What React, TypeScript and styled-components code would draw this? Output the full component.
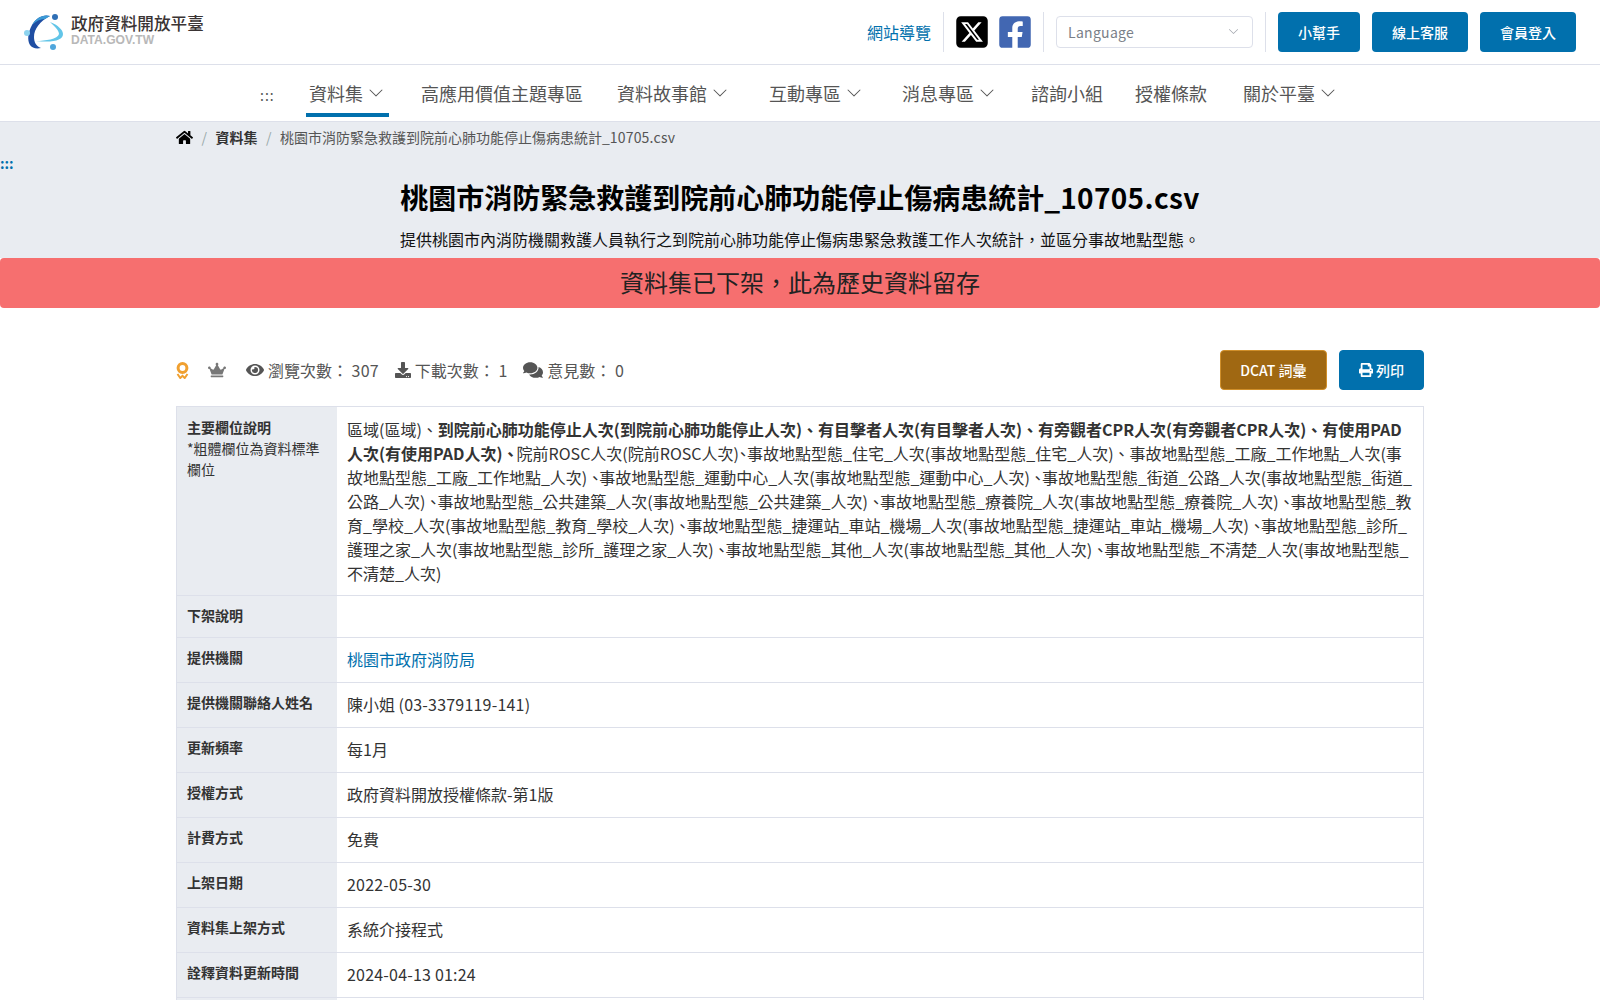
import React from "react";
import styled, { createGlobalStyle } from "styled-components";
import { FaHome, FaEye, FaDownload, FaComments, FaPrint, FaCrown, FaFacebookSquare } from "react-icons/fa";
import { FaSquareXTwitter } from "react-icons/fa6";
import { BsChevronDown } from "react-icons/bs";

const GlobalStyle = createGlobalStyle`
  html, body {
    margin: 0;
    padding: 0;
    height: 1000px;
    overflow: hidden;
    background: #fff;
    font-family: "Noto Sans CJK TC", "Noto Sans", sans-serif;
    color: #333;
  }
  * { box-sizing: border-box; }
`;

const TopBar = styled.header`
  height: 65px;
  display: flex;
  align-items: center;
  justify-content: space-between;
  padding: 0 24px 1px;
  border-bottom: 1px solid #dde0ea;
`;

const Logo = styled.a`
  display: flex;
  align-items: center;
  gap: 7px;
`;

const LogoText = styled.div`
  display: flex;
  flex-direction: column;
  padding-bottom: 2px;
`;

const LogoTitle = styled.span`
  font-size: 16.6px;
  font-weight: 500;
  color: #3a3434;
  line-height: 18px;
`;

const LogoSub = styled.span`
  font-family: "Liberation Sans", sans-serif;
  font-size: 12.1px;
  font-weight: 700;
  color: #b8b8b8;
  line-height: 14px;
  margin-top: 1px;
`;

const TopRight = styled.div`
  display: flex;
  align-items: center;
  height: 40px;
`;

const SiteMapLink = styled.a`
  font-size: 16px;
  color: #0170ad;
  padding-right: 12px;
`;

const Divider = styled.span`
  width: 1px;
  height: 40px;
  background: #dde0ea;
`;

const Socials = styled.div`
  display: flex;
  align-items: center;
  gap: 11px;
  padding: 0 12px;
`;

const XIcon = styled(FaSquareXTwitter)`
  display: block;
  width: 32px;
  height: 36px;
  color: #000;
`;

const FbIcon = styled(FaFacebookSquare)`
  display: block;
  width: 32px;
  height: 36px;
  color: #4267b2;
`;

const LanguageSelect = styled.div`
  width: 197px;
  height: 32px;
  margin: 0 12px;
  padding: 0 13px 0 11px;
  display: flex;
  align-items: center;
  justify-content: space-between;
  border: 1px solid #dde0ea;
  border-radius: 4px;
  font-size: 14px;
  color: #7a7f88;
  letter-spacing: 0.3px;
`;

const ButtonGroup = styled.div`
  display: flex;
  gap: 12px;
  margin-left: 12px;
`;

const HeadButton = styled.a`
  height: 40px;
  padding: 0 20px;
  display: flex;
  align-items: center;
  background: #0170ad;
  border-radius: 4px;
  color: #fff;
  font-size: 14px;
  font-weight: 500;
`;

const Nav = styled.nav`
  height: 57px;
  display: flex;
  align-items: flex-start;
  padding-left: 260px;
  border-bottom: 1px solid #dde0ea;
`;

const NavAnchor = styled.span`
  width: 46px;
  height: 52px;
  padding-top: 7px;
  font-size: 14px;
  color: #555;
  display: flex;
  align-items: center;
  letter-spacing: 1px;
`;

const NavItem = styled.a<{ $active?: boolean; $gap: number }>`
  display: flex;
  align-items: center;
  gap: 5px;
  height: 52px;
  padding: 7px 5px 0 3px;
  margin-right: ${(p) => p.$gap}px;
  font-size: 18px;
  color: #555;
  border-bottom: 4px solid ${(p) => (p.$active ? "#0170ad" : "transparent")};
`;

const Hero = styled.section`
  background: #e9ecf1;
  height: 136px;
  display: flex;
  flex-direction: column;
`;

const Breadcrumb = styled.div`
  display: flex;
  align-items: center;
  height: 30px;
  padding-left: 176px;
  font-size: 14px;
  color: #555;
`;

const Sep = styled.span`
  margin: 0 8.5px;
  color: #9aa;
`;

const CrumbStrong = styled.span`
  font-weight: 700;
  color: #333;
`;

const HeroAnchor = styled.div`
  margin-top: 4px;
  font-size: 14px;
  line-height: 14px;
  color: #0170ad;
  font-weight: 700;
  height: 18px;
`;

const Title = styled.h1`
  margin: 3px 0 0;
  text-align: center;
  font-size: 28px;
  line-height: 40px;
  font-weight: 700;
  color: #000;
`;

const Subtitle = styled.p`
  margin: 10px 0 0;
  text-align: center;
  font-size: 16px;
  line-height: 24px;
  color: #111;
`;

const Digits = styled.span`
  letter-spacing: 0.0125em;
`;

const Banner = styled.div`
  height: 50px;
  background: #f66f6f;
  border-radius: 4px;
  display: flex;
  align-items: center;
  justify-content: center;
  padding-bottom: 4px;
  font-size: 24px;
  color: #222;
`;

const Main = styled.main`
  width: 1248px;
  margin: 42px auto 0;
`;

const StatsRow = styled.div`
  display: flex;
  align-items: center;
  justify-content: space-between;
  height: 40px;
  margin-bottom: 16px;
`;

const Stats = styled.div`
  display: flex;
  align-items: center;
  font-size: 16px;
  color: #555;
`;

const Stat = styled.span<{ $gap?: number }>`
  display: flex;
  align-items: center;
  gap: 4px;
  margin-right: ${(p) => p.$gap ?? 16}px;
  white-space: pre;
`;

const Actions = styled.div`
  display: flex;
  gap: 12px;
`;

const ActionButton = styled.a<{ $brown?: boolean }>`
  height: 40px;
  padding: 0 ${(p) => (p.$brown ? 19.5 : 19)}px;
  display: flex;
  align-items: center;
  gap: 3px;
  border-radius: 4px;
  font-size: 14px;
  font-weight: 500;
  color: #fff;
  background: ${(p) => (p.$brown ? "#a06812" : "#0170ad")};
  border: 1px solid ${(p) => (p.$brown ? "#d08f2a" : "#0170ad")};
`;

const InfoTable = styled.table`
  width: 100%;
  border-collapse: collapse;
  table-layout: fixed;
  border: 1px solid #dde0ea;
`;

const Row = styled.tr`
  border-bottom: 1px solid #dde0ea;
`;

const Label = styled.th<{ $lead?: boolean }>`
  width: 160px;
  padding: ${(p) => (p.$lead ? 10 : 9)}px 10px 0;
  background: #e9ecf1;
  vertical-align: top;
  text-align: left;
  font-size: 14px;
  line-height: 21px;
  font-weight: 700;
  color: #333;
`;

const LabelNote = styled.span`
  font-weight: 400;
  display: block;
`;

const Value = styled.td<{ $height?: number; $lead?: boolean }>`
  padding: ${(p) => (p.$lead ? "10px 10px 10px 10.5px" : "9px 10px 11px 10.5px")};
  vertical-align: top;
  font-size: 16px;
  line-height: 24px;
  color: #333;
  height: ${(p) => p.$height ?? 45}px;
`;

const ValueLink = styled.a`
  color: #0170ad;
`;

const StrongFields = styled.b`
  margin-right: -2px;
`;

// the plain 、 sits tighter in the reference, the first one after ROSC most of all
const HalfComma = styled.span`
  font-feature-settings: "halt";
`;

const TightComma = styled.span`
  letter-spacing: -4px;
`;

const withCommas = (text: string) =>
  text.split("、").map((part, i) => (
    <React.Fragment key={i}>
      {i === 1 && "、"}
      {i > 1 && <TightComma>、</TightComma>}
      {part}
    </React.Fragment>
  ));

const Medal = () => (
  <svg width="13" height="17" viewBox="0 0 13 17" fill="none">
    <circle cx="6.5" cy="6" r="4.4" stroke="#f0a030" strokeWidth="3" />
    <path d="M1.5 12l2.8 4 2.200-2.200 2.200 2.200 2.800-4" stroke="#f0a030" strokeWidth="2" />
  </svg>
);

const LogoMark = () => (
  <svg width="40" height="38" viewBox="0 0 40 38" fill="none">
    <path d="M26 3C19 1 12 5 8 12 4 19 3 27 6 32c2 3 6 4 11 3-5-2-7-6-7-11 0-8 6-16 16-21z" fill="#1f4ea3" />
    <path d="M26 3C19 1 12 5 8 12c4-4 8-6 13-6 2-1 3-2 5-3z" fill="#3b9ad6" />
    <path d="M26 9c8 3 13 8 13 12 0 6-9 9-27 7 9 0 22-2 23-7 0-4-5-8-9-12z" fill="#62c5e8" />
    <circle cx="31" cy="4" r="3" fill="#2f6fb5" />
    <circle cx="3" cy="20" r="3" fill="#8ed4ef" />
    <circle cx="29" cy="34" r="3" fill="#4fa6dc" />
  </svg>
);

const navItems = [
  { text: "資料集", caret: true, active: true, gap: 29 },
  { text: "高應用價值主題專區", gap: 26 },
  { text: "資料故事館", caret: true, gap: 33 },
  { text: "互動專區", caret: true, gap: 32 },
  { text: "消息專區", caret: true, gap: 28 },
  { text: "諮詢小組", gap: 24 },
  { text: "授權條款", gap: 28 },
  { text: "關於平臺", caret: true, gap: 0 },
];

const simpleRows = [
  ["提供機關聯絡人姓名", <>陳小姐 <Digits>(03-3379119-141)</Digits></>],
  ["更新頻率", "每1月"],
  ["授權方式", "政府資料開放授權條款-第1版"],
  ["計費方式", "免費"],
  ["上架日期", <Digits>2022-05-30</Digits>],
  ["資料集上架方式", "系統介接程式"],
  ["詮釋資料更新時間", <Digits>2024-04-13 01:24</Digits>],
] as const;

const restOfFields =
  "事故地點型態_住宅_人次(事故地點型態_住宅_人次)、事故地點型態_工廠_工作地點_人次(事故地點型態_工廠_工作地點_人次)、事故地點型態_運動中心_人次(事故地點型態_運動中心_人次)、事故地點型態_街道_公路_人次(事故地點型態_街道_公路_人次)、事故地點型態_公共建築_人次(事故地點型態_公共建築_人次)、事故地點型態_療養院_人次(事故地點型態_療養院_人次)、事故地點型態_教育_學校_人次(事故地點型態_教育_學校_人次)、事故地點型態_捷運站_車站_機場_人次(事故地點型態_捷運站_車站_機場_人次)、事故地點型態_診所_護理之家_人次(事故地點型態_診所_護理之家_人次)、事故地點型態_其他_人次(事故地點型態_其他_人次)、事故地點型態_不清楚_人次(事故地點型態_不清楚_人次)";

export default function App() {
  return (
    <>
      <GlobalStyle />
      <TopBar>
        <Logo>
          <LogoMark />
          <LogoText>
            <LogoTitle>政府資料開放平臺</LogoTitle>
            <LogoSub>DATA.GOV.TW</LogoSub>
          </LogoText>
        </Logo>
        <TopRight>
          <SiteMapLink>網站導覽</SiteMapLink>
          <Divider />
          <Socials>
            <XIcon />
            <FbIcon />
          </Socials>
          <Divider />
          <LanguageSelect>
            Language
            <BsChevronDown size={11} color="#a0a4ac" />
          </LanguageSelect>
          <Divider />
          <ButtonGroup>
            <HeadButton>小幫手</HeadButton>
            <HeadButton>線上客服</HeadButton>
            <HeadButton>會員登入</HeadButton>
          </ButtonGroup>
        </TopRight>
      </TopBar>
      <Nav>
        <NavAnchor>:::</NavAnchor>
        {navItems.map((item) => (
          <NavItem key={item.text} $active={item.active} $gap={item.gap}>
            {item.text}
            {item.caret && <BsChevronDown size={16} color="#555" />}
          </NavItem>
        ))}
      </Nav>
      <Hero>
        <Breadcrumb>
          <FaHome size={17} color="#000" />
          <Sep>/</Sep>
          <CrumbStrong>資料集</CrumbStrong>
          <Sep>/</Sep>
          <span>桃園市消防緊急救護到院前心肺功能停止傷病患統計_<Digits>10705.csv</Digits></span>
        </Breadcrumb>
        <HeroAnchor>:::</HeroAnchor>
        <Title>桃園市消防緊急救護到院前心肺功能停止傷病患統計_<Digits>10705.csv</Digits></Title>
        <Subtitle>提供桃園市內消防機關救護人員執行之到院前心肺功能停止傷病患緊急救護工作人次統計，並區分事故地點型態。</Subtitle>
      </Hero>
      <Banner>資料集已下架，此為歷史資料留存</Banner>
      <Main>
        <StatsRow>
          <Stats>
            <Stat $gap={19}><Medal /></Stat>
            <Stat $gap={20}><FaCrown size={18} color="#777" /></Stat>
            <Stat><FaEye size={18} /><span>瀏覽次數： <Digits>307</Digits></span></Stat>
            <Stat><FaDownload size={16} />下載次數： 1</Stat>
            <Stat><FaComments size={20} />意見數： 0</Stat>
          </Stats>
          <Actions>
            <ActionButton $brown>DCAT 詞彙</ActionButton>
            <ActionButton><FaPrint size={14} />列印</ActionButton>
          </Actions>
        </StatsRow>
        <InfoTable>
          <tbody>
            <Row>
              <Label $lead>
                主要欄位說明
                <LabelNote>*粗體欄位為資料標準欄位</LabelNote>
              </Label>
              <Value $lead>
                區域(區域)、<StrongFields>到院前心肺功能停止人次(到院前心肺功能停止人次)、有目擊者人次(有目擊者人次)、有旁觀者CPR人次(有旁觀者CPR人次)、有使用PAD人次(有使用PAD人次)、</StrongFields>
                院前ROSC人次(院前ROSC人次)<HalfComma>、</HalfComma>{withCommas(restOfFields)}
              </Value>
            </Row>
            <Row>
              <Label>下架說明</Label>
              <Value $height={42} />
            </Row>
            <Row>
              <Label>提供機關</Label>
              <Value><ValueLink>桃園市政府消防局</ValueLink></Value>
            </Row>
            {simpleRows.map(([label, value]) => (
              <Row key={label}>
                <Label>{label}</Label>
                <Value>{value}</Value>
              </Row>
            ))}
            <Row>
              <Label />
              <Value />
            </Row>
          </tbody>
        </InfoTable>
      </Main>
    </>
  );
}
